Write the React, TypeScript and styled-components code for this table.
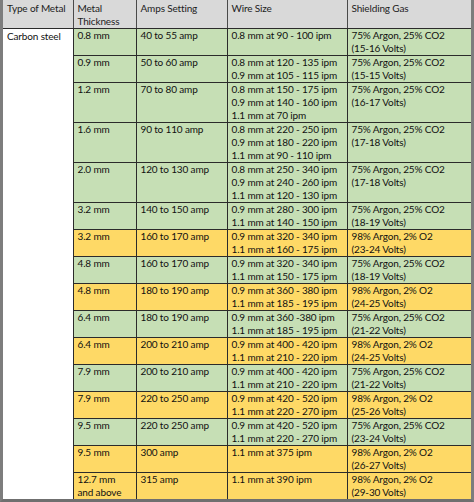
import styled, { createGlobalStyle } from 'styled-components'

const GlobalStyle = createGlobalStyle`
  html, body {
    margin: 0;
    padding: 0;
    background: #ffffff;
  }
`

type Shade = 'green' | 'yellow'

interface IRow {
  thickness: string[]
  amps: string
  wire: string[]
  gas: string[]
  shade: Shade
}

const ARGON_CO2 = '75% Argon, 25% CO2'
const ARGON_O2 = '98% Argon, 2% O2'

const rows: IRow[] = [
  { thickness: ['0.8 mm'], amps: '40 to 55 amp', wire: ['0.8 mm at 90 - 100 ipm'], gas: [ARGON_CO2, '(15-16 Volts)'], shade: 'green' },
  { thickness: ['0.9 mm'], amps: '50 to 60 amp', wire: ['0.8 mm at 120 - 135 ipm', '0.9 mm at 105 - 115 ipm'], gas: [ARGON_CO2, '(15-15 Volts)'], shade: 'green' },
  { thickness: ['1.2 mm'], amps: '70 to 80 amp', wire: ['0.8 mm at 150 - 175 ipm', '0.9 mm at 140 - 160 ipm', '1.1 mm at 70 ipm'], gas: [ARGON_CO2, '(16-17 Volts)'], shade: 'green' },
  { thickness: ['1.6 mm'], amps: '90 to 110 amp', wire: ['0.8 mm at 220 - 250 ipm', '0.9 mm at 180 - 220 ipm', '1.1 mm at 90 - 110 ipm'], gas: [ARGON_CO2, '(17-18 Volts)'], shade: 'green' },
  { thickness: ['2.0 mm'], amps: '120 to 130 amp', wire: ['0.8 mm at 250 - 340 ipm', '0.9 mm at 240 - 260 ipm', '1.1 mm at 120 - 130 ipm'], gas: [ARGON_CO2, '(17-18 Volts)'], shade: 'green' },
  { thickness: ['3.2 mm'], amps: '140 to 150 amp', wire: ['0.9 mm at 280 - 300 ipm', '1.1 mm at 140 - 150 ipm'], gas: [ARGON_CO2, '(18-19 Volts)'], shade: 'green' },
  { thickness: ['3.2 mm'], amps: '160 to 170 amp', wire: ['0.9 mm at 320 - 340 ipm', '1.1 mm at 160 - 175 ipm'], gas: [ARGON_O2, '(23-24 Volts)'], shade: 'yellow' },
  { thickness: ['4.8 mm'], amps: '160 to 170 amp', wire: ['0.9 mm at 320 - 340 ipm', '1.1 mm at 150 - 175 ipm'], gas: [ARGON_CO2, '(18-19 Volts)'], shade: 'green' },
  { thickness: ['4.8 mm'], amps: '180 to 190 amp', wire: ['0.9 mm at 360 - 380 ipm', '1.1 mm at 185 - 195 ipm'], gas: [ARGON_O2, '(24-25 Volts)'], shade: 'yellow' },
  { thickness: ['6.4 mm'], amps: '180 to 190 amp', wire: ['0.9 mm at 360 -380 ipm', '1.1 mm at 185 - 195 ipm'], gas: [ARGON_CO2, '(21-22 Volts)'], shade: 'green' },
  { thickness: ['6.4 mm'], amps: '200 to 210 amp', wire: ['0.9 mm at 400 - 420 ipm', '1.1 mm at 210 - 220 ipm'], gas: [ARGON_O2, '(24-25 Volts)'], shade: 'yellow' },
  { thickness: ['7.9 mm'], amps: '200 to 210 amp', wire: ['0.9 mm at 400 - 420 ipm', '1.1 mm at 210 - 220 ipm'], gas: [ARGON_CO2, '(21-22 Volts)'], shade: 'green' },
  { thickness: ['7.9 mm'], amps: '220 to 250 amp', wire: ['0.9 mm at 420 - 520 ipm', '1.1 mm at 220 - 270 ipm'], gas: [ARGON_O2, '(25-26 Volts)'], shade: 'yellow' },
  { thickness: ['9.5 mm'], amps: '220 to 250 amp', wire: ['0.9 mm at 420 - 520 ipm', '1.1 mm at 220 - 270 ipm'], gas: [ARGON_CO2, '(23-24 Volts)'], shade: 'green' },
  { thickness: ['9.5 mm'], amps: '300 amp', wire: ['1.1 mm at 375 ipm'], gas: [ARGON_O2, '(26-27 Volts)'], shade: 'yellow' },
  { thickness: ['12.7 mm', 'and above'], amps: '315 amp', wire: ['1.1 mm at 390 ipm'], gas: [ARGON_O2, '(29-30 Volts)'], shade: 'yellow' },
]

const shades: Record<Shade, string> = {
  green: '#c6dfb5',
  yellow: '#fed966',
}

const Frame = styled.div`
  width: 474px;
  height: 502px;
  box-sizing: border-box;
  border-left: 3px solid #7d7d7d;
  border-right: 3px solid #7d7d7d;
  border-bottom: 3px solid #6f6f6f;
  overflow: hidden;
  background: #ffffff;
`

const Table = styled.table`
  width: 100%;
  border-collapse: collapse;
  table-layout: fixed;
  font-family: Lato, 'Liberation Sans', sans-serif;
  font-size: 10px;
  letter-spacing: -0.15px;
  line-height: 13px;
  color: #111111;
`

const HeadCell = styled.th`
  background: #d9d9d9;
  color: #222222;
  font-weight: normal;
  text-align: left;
  vertical-align: top;
  white-space: nowrap;
  padding: 2px 4px 0;
  border-left: 1px solid #4a4a4a;
  border-bottom: 1px solid #2b2b2b;
  &:first-child {
    border-left: none;
  }
`

const MetalCell = styled.td`
  background: #ffffff;
  vertical-align: top;
  white-space: nowrap;
  padding: 1px 4px 0;
  border-right: 1px solid #2b2b2b;
`

const Cell = styled.td<{ $shade: Shade }>`
  background: ${(props) => shades[props.$shade]};
  vertical-align: top;
  padding: 0 4px;
  white-space: nowrap;
  border: 1px solid #2b2b2b;
  &:last-child {
    border-right: none;
  }
`

const Line = styled.div`
  white-space: nowrap;
`

const Lines = ({ items }: { items: string[] }) => (
  <>
    {items.map((item, i) => (
      <Line key={i}>{item}</Line>
    ))}
  </>
)

export default function App() {
  return (
    <Frame>
      <GlobalStyle />
      <Table>
        <colgroup>
          <col style={{ width: 70 }} />
          <col style={{ width: 63 }} />
          <col style={{ width: 91 }} />
          <col style={{ width: 120 }} />
          <col />
        </colgroup>
        <thead>
          <tr>
            <HeadCell>Type of Metal</HeadCell>
            <HeadCell>
              <Lines items={['Metal', 'Thickness']} />
            </HeadCell>
            <HeadCell>Amps Setting</HeadCell>
            <HeadCell>Wire Size</HeadCell>
            <HeadCell>Shielding Gas</HeadCell>
          </tr>
        </thead>
        <tbody>
          {rows.map((row, i) => (
            <tr key={i}>
              {i === 0 && <MetalCell rowSpan={rows.length}>Carbon steel</MetalCell>}
              <Cell $shade={row.shade}>
                <Lines items={row.thickness} />
              </Cell>
              <Cell $shade={row.shade}>{row.amps}</Cell>
              <Cell $shade={row.shade}>
                <Lines items={row.wire} />
              </Cell>
              <Cell $shade={row.shade}>
                <Lines items={row.gas} />
              </Cell>
            </tr>
          ))}
        </tbody>
      </Table>
    </Frame>
  )
}
